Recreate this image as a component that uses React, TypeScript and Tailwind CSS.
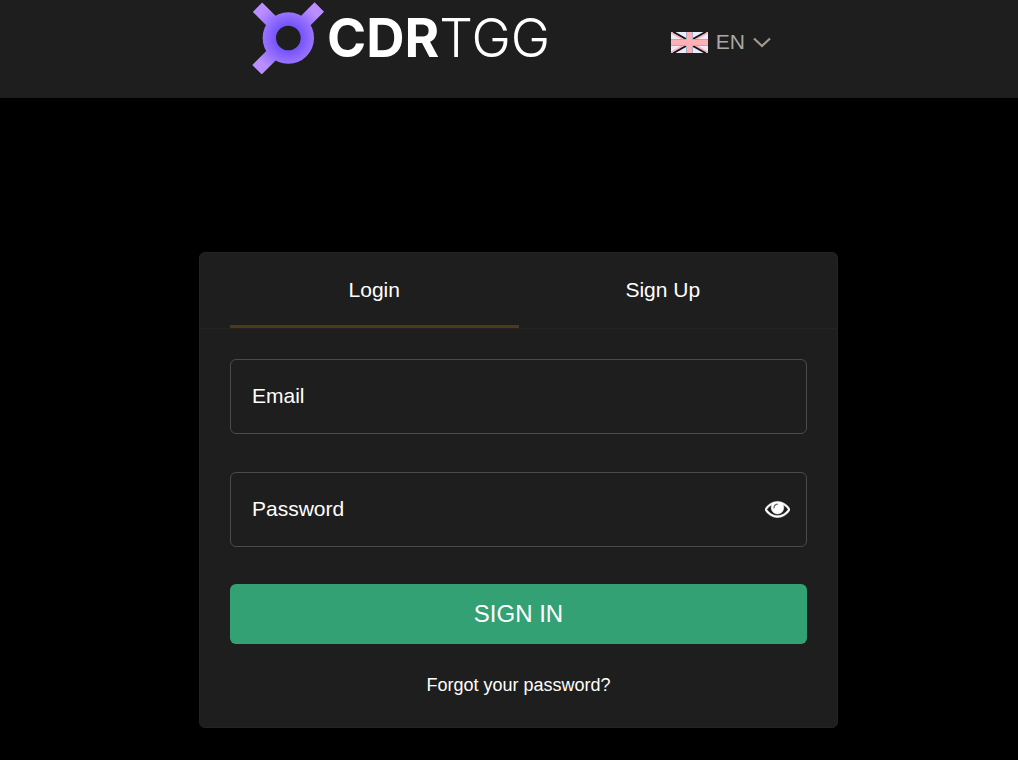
import { useState } from 'react';
import type { FormEvent } from 'react';

type Tab = 'login' | 'signup';

const tabs: { id: Tab; label: string }[] = [
  { id: 'login', label: 'Login' },
  { id: 'signup', label: 'Sign Up' },
];

const LogoMark = () => (
  <svg className="size-[72px] shrink-0" viewBox="0 0 216 216" fill="none" aria-hidden="true">
    <defs>
      <radialGradient id="mark" gradientUnits="userSpaceOnUse" cx="109" cy="108" r="128">
        <stop offset="0.28" stopColor="#7352fb" />
        <stop offset="0.6" stopColor="#9a74fd" />
        <stop offset="0.85" stopColor="#bb8eff" />
      </radialGradient>
    </defs>
    <g stroke="url(#mark)">
      <path d="M16.5 15.5 L64 63 M202 15 L154 63 M15 203 L63 155" strokeWidth="40" />
      <circle cx="109" cy="108" r="57" strokeWidth="40" />
    </g>
  </svg>
);

const FlagGB = () => (
  <svg className="h-[21px] w-[37px]" viewBox="0 0 37 21" aria-hidden="true">
    <rect width="37" height="21" fill="#e9ecfb" />
    <path d="M2 0L18 9M35 0L19 9M2 21L18 12M35 21L19 12" stroke="#14141a" strokeWidth="2.4" />
    <path d="M0 0.5L16 9.5M37 0.5L21 9.5M0 20.5L16 11.5M37 20.5L21 11.5" stroke="#ffb0b4" strokeWidth="1.6" />
    <path d="M18.5 0V21" stroke="#a9adc8" strokeWidth="7" />
    <path d="M0 10.5H37" stroke="#a9adc8" strokeWidth="7" />
    <path d="M18.5 0V21M0 10.5H37" stroke="#ffb0b4" strokeWidth="5" />
  </svg>
);

const EyeIcon = () => (
  <svg
    className="size-[25px]"
    viewBox="0 64 1792 1792"
    fill="currentColor"
    stroke="currentColor"
    strokeWidth="40"
    aria-hidden="true"
  >
    <path d="M1664 960q-152-236-381-353 61 104 61 225 0 185-131.5 316.5t-316.5 131.5-316.5-131.5-131.5-316.5q0-121 61-225-229 117-381 353 133 205 333.5 326.5t434.5 121.5 434.5-121.5 333.5-326.5zm-720-384q0-20-14-34t-34-14q-125 0-214.5 89.5t-89.5 214.5q0 20 14 34t34 14 34-14 14-34q0-86 61-147t147-61q20 0 34-14t14-34zm848 384q0 34-20 69-140 230-376.5 368.5t-499.5 138.5-499.5-139-376.5-368q-20-35-20-69t20-69q140-229 376.5-368t499.5-139 499.5 139 376.5 368q20 35 20 69z" />
  </svg>
);

const Header = () => (
  <header className="h-[98px] bg-[#1e1e1e]">
    <div className="mx-auto flex max-w-[524px] items-start justify-between pl-[5px] pt-[2px]">
      <a href="#home" className="flex items-center gap-[3px] text-white">
        <LogoMark />
        <span className="font-['Inter',sans-serif] text-[53px] leading-[72px]">
          <span className="font-bold">CDR</span>
          <span className="font-light">TGG</span>
        </span>
      </a>
      <button
        type="button"
        aria-haspopup="listbox"
        className="flex h-20 cursor-pointer items-center text-[21px] text-[#a9a9a9]"
      >
        <FlagGB />
        <span className="ml-2">EN</span>
        <svg className="ml-2 h-[11px] w-[18px]" viewBox="0 0 18 11" fill="none" aria-hidden="true">
          <path d="M1 1.5L9 9L17 1.5" stroke="#a3998f" strokeWidth="2.2" />
        </svg>
      </button>
    </div>
  </header>
);

interface FieldProps {
  id: string;
  label: string;
  type: string;
  children?: React.ReactNode;
}

// The label sits in the box and moves up to its edge once there is a value
const Field = ({ id, label, type, children }: FieldProps) => (
  <div className="relative">
    <input
      id={id}
      type={type}
      placeholder=" "
      className="peer block h-[75px] w-full rounded-md border border-[#4b4b4b] bg-transparent pl-[22px] pr-14 text-[21px] text-white outline-none focus:border-[#777]"
    />
    <label
      htmlFor={id}
      className="pointer-events-none absolute left-[22px] top-1 text-sm text-white peer-placeholder-shown:top-[22px] peer-placeholder-shown:text-[21px] peer-placeholder-shown:leading-[30px]"
    >
      {label}
    </label>
    {children}
  </div>
);

const LoginForm = () => {
  const [showPassword, setShowPassword] = useState(false);

  const handleSubmit = (e: FormEvent) => {
    e.preventDefault();
  };

  return (
    <form onSubmit={handleSubmit} className="flex flex-col px-[30px] pb-[29px] pt-[30px]">
      <div className="flex flex-col gap-[38px]">
        <Field id="email" label="Email" type="email" />
        <Field id="password" label="Password" type={showPassword ? 'text' : 'password'}>
          <button
            type="button"
            aria-label="Show password"
            onClick={() => setShowPassword(!showPassword)}
            className="absolute inset-y-0 right-[17px] flex cursor-pointer items-center text-white"
          >
            <EyeIcon />
          </button>
        </Field>
      </div>

      <button
        type="submit"
        className="mt-[37px] h-[60px] cursor-pointer rounded-md bg-[#33a174] text-2xl text-white"
      >
        SIGN IN
      </button>
      <a href="#forgot" className="mt-[29px] self-center text-lg leading-[25px] text-white">
        Forgot your password?
      </a>
    </form>
  );
};

export default function App() {
  const [tab, setTab] = useState<Tab>('login');

  return (
    <div className="min-h-screen bg-black font-['Liberation_Sans',Arial,sans-serif]">
      <Header />
      <main className="pb-8 pl-[19px] pt-[154px]">
        <div className="mx-auto max-w-[639px] rounded-md border border-[#242424] bg-[#1e1e1e]">
          <div role="tablist" className="flex border-b border-[#242424] px-[30px]">
            {tabs.map((t) => (
              <button
                key={t.id}
                type="button"
                role="tab"
                aria-selected={tab === t.id}
                onClick={() => setTab(t.id)}
                className={`h-[75px] flex-1 cursor-pointer border-b-3 pt-[2px] text-[21px] text-white ${
                  tab === t.id ? 'border-[#4d3a16]' : 'border-transparent'
                }`}
              >
                {t.label}
              </button>
            ))}
          </div>
          <LoginForm />
        </div>
      </main>
    </div>
  );
}
